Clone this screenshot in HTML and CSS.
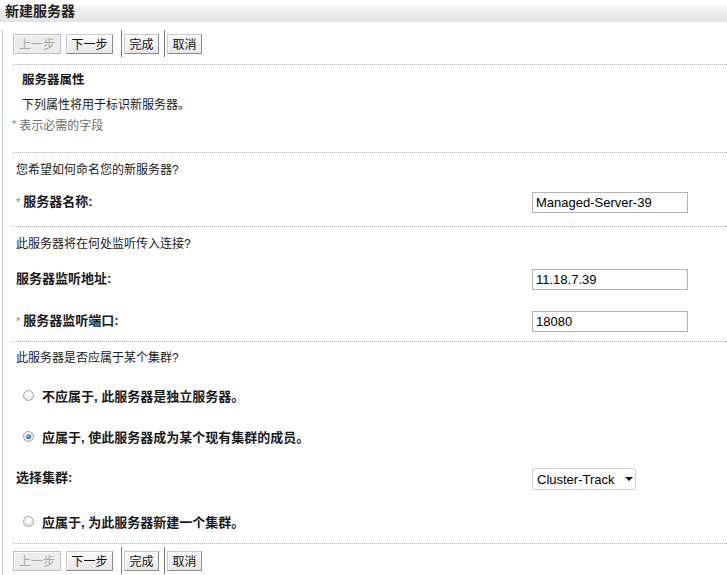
FILE: index.html
```html
<!DOCTYPE html>
<html lang="zh">
<head>
<meta charset="utf-8">
<title>新建服务器</title>
<link rel="stylesheet" href="styles.css">
</head>
<body>
<div class="header"><span class="title">新建服务器</span></div>
<div class="page">
  <div class="toolbar">
    <span class="btn disabled w48">上一步</span>
    <span class="btn w46">下一步</span>
    <span class="sep"></span>
    <span class="btn w35">完成</span>
    <span class="sep"></span>
    <span class="btn w35">取消</span>
  </div>
  <div class="dots"></div>
  <div class="intro">
    <div class="row r-title"><span class="strong">服务器属性</span></div>
    <div class="row r-desc">下列属性将用于标识新服务器。</div>
    <div class="row r-req"><span class="star">*</span><span class="req">表示必需的字段</span></div>
  </div>
  <div class="dots"></div>
  <div class="section">
    <div class="row q h30">您希望如何命名您的新服务器?</div>
    <div class="row field h38">
      <span class="label strong"><span class="star">*</span>服务器名称:</span>
      <span class="input">Managed-Server-39</span>
    </div>
    <div class="pad5"></div>
  </div>
  <div class="dots"></div>
  <div class="section">
    <div class="row q h30">此服务器将在何处监听传入连接?</div>
    <div class="row field h44">
      <span class="label strong">服务器监听地址:</span>
      <span class="input">11.18.7.39</span>
    </div>
    <div class="row field h40">
      <span class="label strong"><span class="star">*</span>服务器监听端口:</span>
      <span class="input">18080</span>
    </div>
  </div>
  <div class="dots"></div>
  <div class="section">
    <div class="row q h28">此服务器是否应属于某个集群?</div>
    <div class="row opt h50"><span class="radio"></span><span class="strong">不应属于, 此服务器是独立服务器。</span></div>
    <div class="row opt h32"><span class="radio checked"></span><span class="strong">应属于, 使此服务器成为某个现有集群的成员。</span></div>
    <div class="row field h52">
      <span class="label strong">选择集群:</span>
      <span class="select">Cluster-Track<span class="caret"></span></span>
    </div>
    <div class="row opt h34"><span class="radio"></span><span class="strong">应属于, 为此服务器新建一个集群。</span></div>
    <div class="pad5"></div>
  </div>
  <div class="dots"></div>
  <div class="toolbar bottom">
    <span class="btn disabled w48">上一步</span>
    <span class="btn w46">下一步</span>
    <span class="sep"></span>
    <span class="btn w35">完成</span>
    <span class="sep"></span>
    <span class="btn w35">取消</span>
  </div>
</div>
</body>
</html>
```
FILE: styles.css
```css
html, body {
  margin: 0;
  padding: 0;
  background: #ffffff;
}
body {
  font-family: "Liberation Sans", "Noto Sans CJK SC", sans-serif;
  font-size: 12px;
  color: #1a1a1a;
  width: 727px;
  height: 575px;
  overflow: hidden;
}
.header {
  height: 22px;
  background: linear-gradient(#ffffff 0px, #ffffff 6px, #f3f3f3 7px, #ebebeb 14px, #e3e3e3 22px);
  display: flex;
  align-items: center;
}
.title {
  padding-left: 5px;
  font-size: 14px;
  font-weight: bold;
  color: #222;
  position: relative;
  top: -1px;
}
.page {
  margin-left: 2px;
  border-left: 1px solid #c4cad1;
  height: 553px;
}
.toolbar {
  height: 27px;
  margin-top: 8px;
  margin-bottom: 7px;
  padding-left: 10px;
  display: flex;
  align-items: center;
}
.toolbar.bottom {
  margin-top: 3px;
  margin-bottom: 0;
}
.btn {
  box-sizing: border-box;
  height: 20px;
  display: flex;
  align-items: center;
  justify-content: center;
  font-size: 12px;
  color: #111;
  border: 1px solid #8c8c8c;
  border-top-color: #c8c8c8;
  border-left-color: #c8c8c8;
  box-shadow: inset 1px 1px 0 #ffffff;
  background: linear-gradient(#fbfbfb, #e6e6e6);
  margin-right: 5px;
}
.btn.w48 { width: 48px; }
.btn.w46 { width: 47px; margin-right: 8px; }
.btn.w35 { width: 35px; margin-right: 5px; }
.btn.disabled {
  color: #a8a8a8;
  border-color: #c0c0c0;
  background: #ececec;
}
.sep {
  width: 1px;
  height: 27px;
  background: #7a7a7a;
  margin-right: 2px;
  align-self: stretch;
}
.dots {
  margin-left: 9px;
  border-top: 1px dotted #b5b5b5;
  height: 0;
}
.row {
  display: flex;
  align-items: center;
}
.strong {
  font-weight: bold;
  font-size: 13px;
}
.intro .strong { font-size: 12.5px; }
.intro .r-title { height: 26px; padding-left: 19px; }
.intro .r-desc { height: 24px; padding-left: 19px; }
.intro .r-req { height: 18px; padding-left: 9px; margin-bottom: 19px; }
.star {
  color: #7f8a6a;
  font-size: 11px;
  margin-right: 3px;
  font-weight: normal;
}
.req { color: #6e6e6e; }
.q { padding-left: 13px; }
.h28 { height: 28px; }
.h30 { height: 30px; }
.h32 { height: 32px; }
.h34 { height: 34px; }
.h38 { height: 38px; }
.h40 { height: 40px; }
.h44 { height: 44px; }
.h50 { height: 50px; }
.h52 { height: 52px; }
.pad5 { height: 5px; }
.field { padding-left: 13px; }
.label {
  width: 516px;
  position: relative;
  top: -2px;
}
.input {
  box-sizing: border-box;
  width: 156px;
  height: 21px;
  border: 1px solid #b4b4b4;
  padding-left: 3px;
  font-size: 13px;
  color: #000;
  display: flex;
  align-items: center;
}
.select {
  box-sizing: border-box;
  width: 104px;
  height: 22px;
  border: 1px solid #cfcfd8;
  border-radius: 2px;
  padding-left: 4px;
  font-size: 13px;
  color: #000;
  display: flex;
  align-items: center;
  position: relative;
  top: 1px;
}
.caret {
  margin-left: 10px;
  width: 0;
  height: 0;
  border-left: 4px solid transparent;
  border-right: 4px solid transparent;
  border-top: 4px solid #111;
}
.opt { padding-left: 19px; }
.radio {
  box-sizing: border-box;
  width: 11px;
  height: 11px;
  border-radius: 50%;
  border: 1px solid #a6a6a6;
  background: radial-gradient(circle at 50% 40%, #ffffff 0%, #f2f2f2 45%, #d4d4d4 100%);
  margin-left: 1px;
  margin-right: 8px;
  display: flex;
  align-items: center;
  justify-content: center;
}
.radio.checked::after {
  content: "";
  width: 5px;
  height: 5px;
  border-radius: 50%;
  background: radial-gradient(circle at 40% 35%, #8fc7ee 0%, #2a7dc0 55%, #14497a 100%);
}
```
